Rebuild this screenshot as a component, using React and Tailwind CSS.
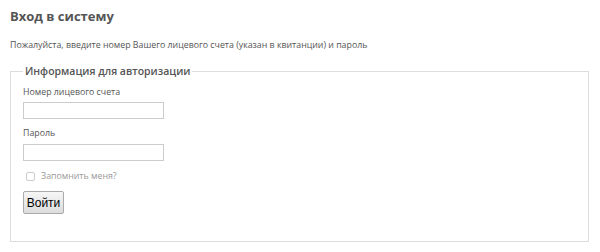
export default function App() {
  return (
    <div className="w-[600px] h-[252px] bg-white overflow-hidden" style={{ fontFamily: '"Open Sans", sans-serif' }}>
      <div className="pl-[10px] pr-[11px] pt-[6px]">
        <h1 className="text-[13px] leading-[20px] font-bold text-[#555]">Вход в систему</h1>
        <p className="mt-[12px] text-[8.8px] leading-[14px] text-[#555]">
          Пожалуйста, введите номер Вашего лицевого счета (указан в квитанции) и пароль
        </p>
        <fieldset className="mt-[12px] h-[178px] border border-[#ddd] px-[12px] pt-0 pb-0 m-0">
          <legend className="px-[2px] ml-0 text-[10.5px] leading-[14px] font-semibold text-[#555]">
            Информация для авторизации
          </legend>
          <div className="flex flex-col items-start">
            <label className="mt-[7px] text-[8.8px] leading-[14px] text-[#555]">Номер лицевого счета</label>
            <input type="text" className="mt-[3px] w-[141px] h-[17px] border border-[#ccc] bg-white outline-none" />
            <label className="mt-[7px] text-[8.8px] leading-[14px] text-[#555]">Пароль</label>
            <input type="password" className="mt-[4px] w-[141px] h-[17px] border border-[#ccc] bg-white outline-none" />
            <div className="mt-[8px] ml-[3px] flex items-center gap-[6px]">
              <span className="w-[9px] h-[9px] border border-[#ccc] rounded-[2px] bg-white"></span>
              <span className="text-[8.8px] leading-[14px] text-[#999]">Запомнить меня?</span>
            </div>
            <button
              className="mt-[8px] w-[41px] h-[23px] border border-[#aaa] rounded-[2px] bg-gradient-to-b from-[#f6f6f6] to-[#dcdcdc] text-[12px] text-black leading-none"
              style={{ fontFamily: '"Liberation Sans", Arial, sans-serif' }}
            >
              Войти
            </button>
          </div>
        </fieldset>
      </div>
    </div>
  );
}
